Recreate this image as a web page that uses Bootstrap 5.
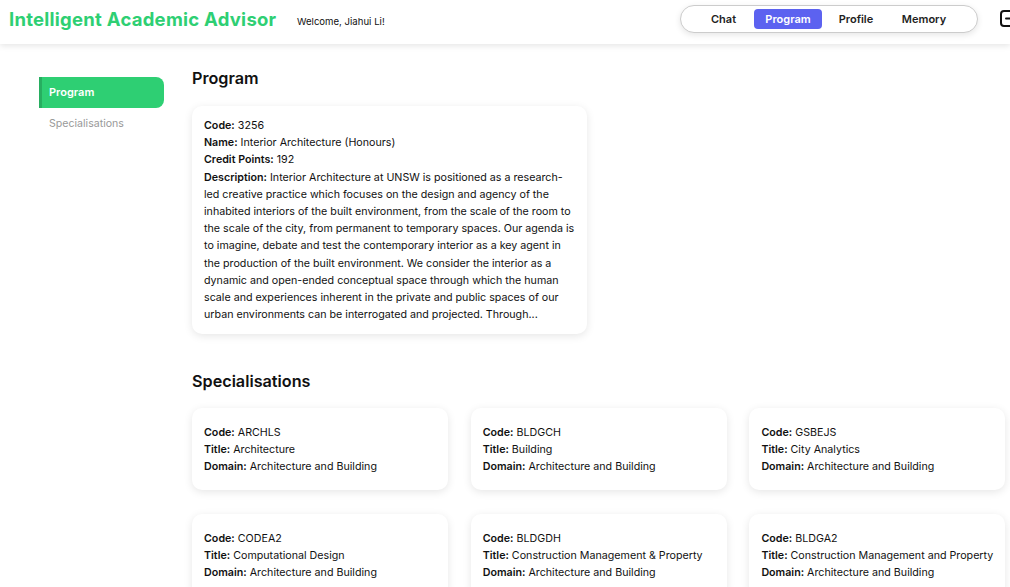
<!DOCTYPE html>
<html lang="en">
<head>
    <meta charset="UTF-8">
    <meta name="viewport" content="width=device-width, initial-scale=1.0">
    <title>Intelligent Academic Advisor</title>
    <link href="https://cdn.jsdelivr.net/npm/bootstrap@5.3.0/dist/css/bootstrap.min.css" rel="stylesheet">
    <style>
        html, body { height: 100%; overflow: hidden; }
        body { font-family: Inter, "Liberation Sans", sans-serif; color: #111; background: #fff; width: 1010px; }
        .top-bar { height: 44px; padding-left: 9px; padding-bottom: 7px; box-shadow: 0 2px 6px rgba(0,0,0,.1); position: relative; width: 1010px; overflow: hidden; flex-wrap: nowrap; }
        .brand-name { color: #2ecf73; font-size: 18.5px; font-weight: 700; letter-spacing: .25px; width: 288px; white-space: nowrap; flex-shrink: 0; margin-top: 3px; }
        .welcome-text { font-size: 9.6px; width: 383px; flex-shrink: 0; margin-top: 7px; }
        .pill-nav { width: 298px; height: 28px; border: 1px solid #ccc; border-radius: 14px; box-shadow: 0 2px 6px rgba(0,0,0,.1); padding-left: 12px; flex-shrink: 0; background: #fff; }
        .pill-nav a { font-size: 11px; font-weight: 600; color: #222; text-decoration: none; height: 20px; line-height: 20px; text-align: center; border-radius: 4px; }
        .pill-nav a.is-active { background: #5c62f0; color: #fff; }
        .logout-icon { margin-left: 22px; flex-shrink: 0; }
        .side-menu { width: 125px; margin-left: 39px; margin-top: 33px; flex-shrink: 0; }
        .side-menu a { display: block; height: 31px; line-height: 31px; padding-left: 10px; font-size: 10.6px; text-decoration: none; color: #999; }
        .side-menu a.is-active { background: #2ecf73; color: #fff; font-size: 11px; font-weight: 600; border-left: 3px solid #27ae60; padding-left: 7px; border-radius: 0 8px 8px 0; }
        .main-area { margin-left: 28px; margin-top: 23px; width: 818px; flex-shrink: 0; }
        .section-title { font-size: 16.2px; font-weight: 600; margin: 0; line-height: 22px; }
        .info-box { background: #fff; border-radius: 10px; box-shadow: 0 2px 9px rgba(0,0,0,.1); font-size: 10.7px; line-height: 17.18px; }
        .info-box b { font-weight: 600; }
        .program-box { width: 395px; height: 228px; margin-top: 17px; margin-bottom: 36px; padding: 11px 12px; }
        .spec-grid { display: grid; grid-template-columns: repeat(3, 256px); column-gap: 22.7px; row-gap: 24px; margin-top: 16px; }
        .spec-box { height: 82px; padding: 15.5px 8px 15px 12px; }
    </style>
</head>
<body>
    <div class="top-bar d-flex align-items-center">
        <div class="brand-name">Intelligent Academic Advisor</div>
        <div class="welcome-text">Welcome, Jiahui Li!</div>
        <div class="pill-nav d-flex align-items-center">
            <a href="#" style="width:61px">Chat</a>
            <a href="#" class="is-active" style="width:68px">Program</a>
            <a href="#" style="width:68px">Profile</a>
            <a href="#" style="width:68px">Memory</a>
        </div>
        <svg class="logout-icon" width="22" height="17" viewBox="0 0 22 17" fill="none" stroke="#111" stroke-width="2" stroke-linecap="round" stroke-linejoin="round">
            <rect x="1" y="1" width="18" height="15" rx="3"/>
            <path d="M6 8.5h12"/>
        </svg>
    </div>

    <div class="d-flex">
        <div class="side-menu">
            <a href="#" class="is-active">Program</a>
            <a href="#">Specialisations</a>
        </div>
        <div class="main-area">
            <h2 class="section-title">Program</h2>
            <div class="info-box program-box">
                <div><b>Code:</b> 3256</div>
                <div><b>Name:</b> Interior Architecture (Honours)</div>
                <div><b>Credit Points:</b> 192</div>
                <div><b>Description:</b> Interior Architecture at UNSW is positioned as a research-led creative practice which focuses on the design and agency of the inhabited interiors of the built environment, from the scale of the room to the scale of the city, from permanent to temporary spaces. Our agenda is to imagine, debate and test the contemporary interior as a key agent in the production of the built environment. We consider the interior as a dynamic and open-ended conceptual space through which the human scale and experiences inherent in the private and public spaces of our urban environments can be interrogated and projected. Through...</div>
            </div>
            <h2 class="section-title">Specialisations</h2>
            <div class="spec-grid">
                <div class="info-box spec-box"><div><b>Code:</b> ARCHLS</div><div><b>Title:</b> Architecture</div><div><b>Domain:</b> Architecture and Building</div></div>
                <div class="info-box spec-box"><div><b>Code:</b> BLDGCH</div><div><b>Title:</b> Building</div><div><b>Domain:</b> Architecture and Building</div></div>
                <div class="info-box spec-box"><div><b>Code:</b> GSBEJS</div><div><b>Title:</b> City Analytics</div><div><b>Domain:</b> Architecture and Building</div></div>
                <div class="info-box spec-box"><div><b>Code:</b> CODEA2</div><div><b>Title:</b> Computational Design</div><div><b>Domain:</b> Architecture and Building</div></div>
                <div class="info-box spec-box"><div><b>Code:</b> BLDGDH</div><div><b>Title:</b> Construction Management &amp; Property</div><div><b>Domain:</b> Architecture and Building</div></div>
                <div class="info-box spec-box"><div><b>Code:</b> BLDGA2</div><div><b>Title:</b> Construction Management and Property</div><div><b>Domain:</b> Architecture and Building</div></div>
            </div>
        </div>
    </div>
    <script src="https://cdn.jsdelivr.net/npm/bootstrap@5.3.0/dist/js/bootstrap.bundle.min.js"></script>
</body>
</html>
